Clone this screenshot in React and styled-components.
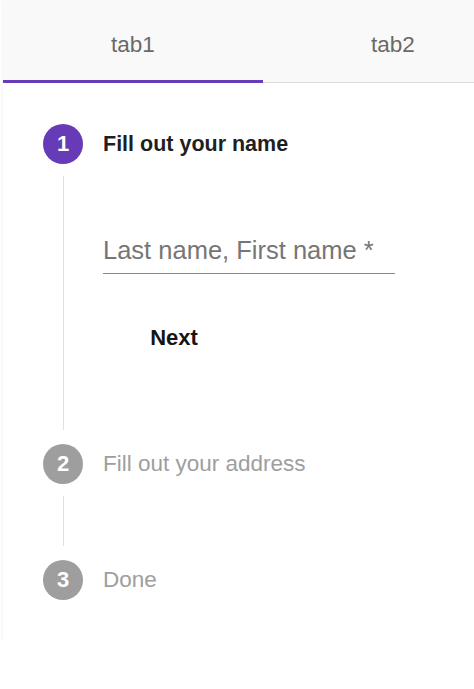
import styled, { createGlobalStyle } from 'styled-components';

const GlobalStyle = createGlobalStyle`
  body {
    margin: 0;
    background: #fff;
    font-family: "Liberation Sans", Arial, sans-serif;
    overflow: hidden;
  }
`;

const Card = styled.div`
  width: 520px;
  margin-left: 3px;
  background: #fff;
  box-shadow: 0 1px 4px rgba(0, 0, 0, 0.08);
  padding-bottom: 41px;
`;

const TabBar = styled.div`
  display: flex;
  background: #f9f9f9;
  border-bottom: 1px solid #dedede;
`;

const Tab = styled.div`
  width: 261px;
  height: 83px;
  box-sizing: border-box;
  padding-top: 10px;
  display: flex;
  align-items: center;
  justify-content: center;
  font-size: 22.5px;
  color: #6a6a6a;
  border-bottom: 3px solid ${(p) => (p.$active ? '#673ab7' : 'transparent')};
  margin-bottom: -1px;
`;

const Steps = styled.div`
  padding: 41px 0 0 40px;
`;

const StepHeader = styled.div`
  display: flex;
  align-items: center;
  gap: 20px;
  height: 40px;
`;

const Circle = styled.div`
  width: 40px;
  height: 40px;
  border-radius: 50%;
  background: ${(p) => (p.$active ? '#673ab7' : '#9e9e9e')};
  color: #fff;
  display: flex;
  align-items: center;
  justify-content: center;
  font-size: 22px;
  font-weight: bold;
`;

const Label = styled.div`
  font-size: ${(p) => (p.$active ? '21.5px' : '22.5px')};
  color: ${(p) => (p.$active ? '#1f1f1f' : '#9e9e9e')};
  font-weight: ${(p) => (p.$active ? 'bold' : 'normal')};
`;

const StepBody = styled.div`
  display: flex;
  flex-direction: column;
  align-items: flex-start;
  margin: 12px 0 14px 20px;
  border-left: 1px solid #e0e0e0;
  padding-left: 39px;
  height: ${(p) => p.$height}px;
  box-sizing: border-box;
`;

const Field = styled.div`
  margin-top: 60px;
  width: 292px;
  border-bottom: 1px solid #8a8a8a;
  padding-bottom: 8px;
`;

const Input = styled.input`
  border: none;
  outline: none;
  padding: 0;
  width: 100%;
  font-family: inherit;
  font-size: 25.5px;
  color: #333;
  background: transparent;
  &::placeholder {
    color: #767676;
  }
`;

const NextButton = styled.button`
  margin-top: 39px;
  min-width: 142px;
  height: 50px;
  border: none;
  background: transparent;
  font-family: inherit;
  font-size: 22px;
  font-weight: bold;
  color: #151515;
  padding: 0;
`;

function App() {
  return (
    <>
      <GlobalStyle />
      <Card>
        <TabBar>
          <Tab $active>tab1</Tab>
          <Tab>tab2</Tab>
        </TabBar>
        <Steps>
          <StepHeader>
            <Circle $active>1</Circle>
            <Label $active>Fill out your name</Label>
          </StepHeader>
          <StepBody $height={254}>
            <Field>
              <Input placeholder="Last name, First name *" />
            </Field>
            <NextButton>Next</NextButton>
          </StepBody>
          <StepHeader>
            <Circle>2</Circle>
            <Label>Fill out your address</Label>
          </StepHeader>
          <StepBody $height={50} />
          <StepHeader>
            <Circle>3</Circle>
            <Label>Done</Label>
          </StepHeader>
        </Steps>
      </Card>
    </>
  );
}

export default App;
